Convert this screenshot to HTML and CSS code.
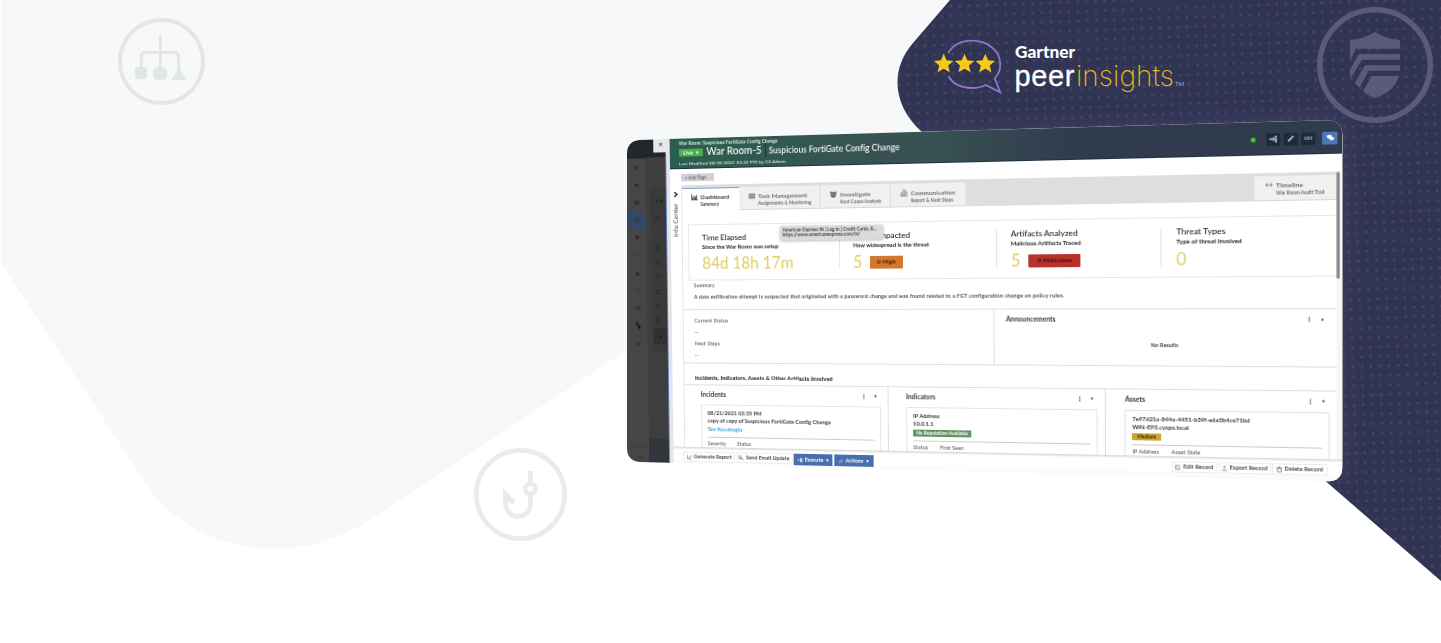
FILE: index.html
```
<!DOCTYPE html>
<html lang="en">
<head>
<meta charset="utf-8">
<title>War Room</title>
<link rel="stylesheet" href="styles.css">
</head>
<body>
<section class="hero">
  <svg class="backdrop" viewBox="0 0 1441 643" aria-hidden="true">
    <defs>
      <pattern id="dots" width="9.05" height="9.6" patternUnits="userSpaceOnUse" patternTransform="translate(1344.2 247.2) rotate(-2)">
        <circle cx="4.5" cy="4.8" r="1.4" fill="#454669"/>
      </pattern>
      <filter id="soft" x="-20%" y="-20%" width="140%" height="140%"><feGaussianBlur stdDeviation="12"/></filter>
      <clipPath id="wedge"><path d="M950 0L913 43C891 68 891 104 922 132L1441 581V0Z"/></clipPath>
    </defs>
    <path class="wave" d="M1 0V263L148 487C178 528 225 549 275 549Q322 549 370 520L627 350L1000 142V0Z"/>
    <g clip-path="url(#wedge)">
      <rect class="wedge" x="880" width="561" height="643"/>
      <path class="glow" d="M627 140L1342 120V482L627 461Z" filter="url(#soft)"/>
      <rect x="880" width="561" height="643" fill="url(#dots)"/>
    </g>
    <g class="mark mark-tree">
      <circle cx="161.5" cy="61.5" r="41.6" stroke-width="4"/>
      <path d="M160.4 36.3V68M141.3 68V56.5Q141.3 52.4 145.4 52.4H174.5Q178.6 52.4 178.6 56.5V70" stroke-width="3" stroke-linecap="round"/>
      <rect class="fill" x="135" y="67" width="12" height="12" rx="2"/>
      <circle class="fill" cx="160.2" cy="73.7" r="7.3"/>
      <path class="fill" d="M179 67.5L171.2 80.3H186.8Z"/>
    </g>
    <g class="mark mark-hook">
      <circle cx="520.5" cy="494.5" r="44.2" stroke-width="4.7"/>
      <path d="M530.4 471V484M530.4 495V504A12.3 12.3 0 0 1 505.6 504V494" stroke-width="4.8"/>
      <circle cx="530.4" cy="488.7" r="5.2" stroke-width="4.4"/>
      <path class="fill" d="M503.2 488.3L515.4 501.3L512 505L503.2 497Z"/>
    </g>
    <g class="mark mark-shield">
      <circle cx="1375" cy="65" r="55.2" stroke-width="5.6"/>
      <path class="fill" d="M1350 40Q1363.500 39 1375 32Q1386.500 39 1400 40V48.700H1356L1350 60.500Z"/>
      <path class="fill" d="M1400 54V59.700H1362L1350.600 78.700L1349.800 69.500L1359 54Z"/>
      <path class="fill" d="M1400 65.300V70.700H1368.500L1359.500 87.700L1354.700 83.300L1365 65.300Z"/>
      <path class="fill" d="M1371.700 76H1398.700Q1395 91.500 1375 98Q1368 96 1363 91.300Z"/>
    </g>
    <g class="peer-logo">
      <path class="bubble" d="M948.300 53C953 45 962 40.700 972 40.700C988 40.700 1000.300 51 1000.300 64.500C1000.300 70 998.500 74.500 994.700 78.300L1000.300 92.300L985.700 85C981 87.500 976 88 971.700 88C962 88 953 84 948.300 76.300"/>
      <path class="star" d="M943.700 53.800L946.500 60.300L953.400 60.900L948.200 65.500L949.800 72.300L943.700 68.700L937.600 72.300L939.200 65.500L934 60.900L940.900 60.300Z"/>
      <path class="star" d="M964.500 53.800L967.300 60.300L974.200 60.900L969 65.500L970.600 72.300L964.500 68.700L958.400 72.300L960 65.500L954.800 60.900L961.700 60.300Z"/>
      <path class="star" d="M985.300 53.800L988.100 60.300L995 60.900L989.800 65.500L991.400 72.300L985.300 68.700L979.200 72.300L980.800 65.500L975.600 60.900L982.500 60.300Z"/>
      <text class="gartner" x="1015" y="58.300" textLength="60" lengthAdjust="spacingAndGlyphs">Gartner</text>
      <text class="peer" x="1014.500" y="86.300" textLength="60">peer</text>
      <text class="insights" x="1076" y="86.300" textLength="98">insights</text>
      <text class="tm" x="1175" y="86" textLength="9">TM</text>
    </g>
  </svg>

  <div class="shot">
    <div class="app">
      <nav class="rail">
        <span class="rail-top">▣</span>
        <span>▤</span><span>◓</span><span>▦</span><span class="on">⤨</span><span class="dk">✥</span><span>⛉</span><span>◉</span><span>▢</span><span>⋈</span><span class="dk">▚</span><span>◍</span>
        <span class="rail-end">◎</span>
      </nav>
      <div class="list">
        <div class="list-top">›</div>
        <div class="list-card"><b>6 It</b><i></i><i class="gap"></i><i></i><i></i><i></i><i></i><i></i><em>◂</em></div>
        <div class="list-foot"></div>
      </div>
      <div class="close">✕</div>
      <div class="drawer">
        <header class="head">
          <div class="head-text">
            <div class="crumb">War Room: Suspicious FortiGate Config Change</div>
            <div class="title-row"><span class="live">Live&nbsp; ▾</span><span class="title">War Room-5</span><span class="subtitle">Suspicious FortiGate Config Change</span></div>
            <div class="modified">Last Modified 08/25/2021 03:35 PM by CS Admin</div>
          </div>
          <div class="tools">
            <span class="pulse"></span>
            <span class="tool"><svg viewBox="0 0 10 10"><path d="M1 5H4.500" stroke-width="1.500"/><path d="M5.500 3V7" stroke-width="1.500"/><path d="M7.800 1.800V4M7.800 4.500V6M7.800 6.500V8.500" stroke-width="1.800"/></svg></span>
            <span class="tool"><svg viewBox="0 0 10 10"><path d="M2.300 7.800L7.800 2.200" stroke-width="1.500"/></svg></span>
            <span class="tool"><svg viewBox="0 0 10 10"><rect x="1.200" y="3.900" width="3.600" height="2.200" rx="1.100"/><rect x="5.200" y="3.900" width="3.600" height="2.200" rx="1.100"/></svg></span>
            <span class="tool chat"><svg viewBox="0 0 10 10"><ellipse class="f" cx="4" cy="4" rx="2.600" ry="2"/><ellipse class="f" cx="6.400" cy="6" rx="2.400" ry="1.800"/></svg></span>
          </div>
        </header>
        <div class="tagbar"><span>+ Add Tags</span></div>
        <div class="body">
          <aside class="info"><svg viewBox="0 0 6 6"><path d="M2 1L4.500 3L2 5"/></svg><span>Info Center</span></aside>
          <main class="main">
            <div class="tabs">
              <div class="tab active"><svg viewBox="0 0 8 8"><path d="M.5 .5V7.200H8M2 6.500V4M3.500 6.500V2.500M5 6.500V3.500M6.500 6.500V1.500"/></svg><p>Dashboard<small>Summary</small></p></div>
              <div class="tab t2"><svg viewBox="0 0 8 8"><path d="M0 1.500H8M0 3.200H8M0 4.900H8M0 6.600H8"/></svg><p>Task Management<small>Assignments &amp; Monitoring</small></p></div>
              <div class="tab t3"><svg viewBox="0 0 8 8"><circle class="f" cx="1.600" cy="2" r="1.400"/><circle class="f" cx="6.400" cy="2" r="1.400"/><circle class="f" cx="4" cy="2.600" r="1.500"/><path class="f" d="M0 3.800H8L6 7.800H2Z"/></svg><p>Investigate<small>Root Cause Analysis</small></p></div>
              <div class="tab t4"><svg viewBox="0 0 8 8"><path d="M0 7.200H8M.7 7V4H2.700V7M3 7V.8H5V7M5.300 7V3H7.300V7" stroke-width=".8"/></svg><p>Communication<small>Report &amp; Next Steps</small></p></div>
              <div class="tab t5"><svg viewBox="0 0 8 8"><path d="M0 4H8M2.500 2L1 4L2.500 6M5.500 2L7 4L5.500 6" stroke-width=".7"/></svg><p>Timeline<small>War Room Audit Trail</small></p></div>
            </div>
            <div class="stats">
              <div class="stat"><h3>Time Elapsed</h3><h4>Since the War Room was setup</h4><div class="num">84d 18h 17m</div></div>
              <div class="stat"><h3>Assets Impacted</h3><h4>How widespread is the threat</h4><div class="num">5<span class="pill high">0 High</span></div></div>
              <div class="stat"><h3>Artifacts Analyzed</h3><h4>Malicious Artifacts Traced</h4><div class="num">5<span class="pill mal">0 Malicious</span></div></div>
              <div class="stat"><h3>Threat Types</h3><h4>Type of threat involved</h4><div class="num">0</div></div>
              <div class="tip">American Express IN | Log in | Credit Cards, R...<br>https://www.americanexpress.com/in/</div>
            </div>
            <div class="summary"><span>Summary</span><p>A data exfiltration attempt is suspected that originated with a password change and was found related to a FGT configuration change on policy rules.</p></div>
            <div class="status">
              <div class="now"><span>Current Status</span><span>--</span><span>Next Steps</span><span>--</span></div>
              <div class="news"><div class="bar"><b>Announcements</b><i>⋮</i><u>▴</u></div><p>No Results</p></div>
            </div>
            <div class="involved">Incidents, Indicators, Assets &amp; Other Artifacts Involved</div>
            <div class="cols">
              <div class="col"><div class="bar"><b>Incidents</b><i>⋮</i><u>▾</u></div>
                <div class="card"><p>08/21/2021 03:35 PM</p><p>copy of copy of Suspicious FortiGate Config Change</p><p class="link">Tan Kucukoglu</p><hr><p class="meta"><span>Severity</span><span>Status</span></p></div></div>
              <div class="col"><div class="bar"><b>Indicators</b><i>⋮</i><u>▾</u></div>
                <div class="card"><p>IP Address</p><p>10.0.1.1</p><p class="rep"><span>No Reputation Available</span></p><hr><p class="meta"><span>Status</span><span>First Seen</span></p></div></div>
              <div class="col"><div class="bar"><b>Assets</b><i>⋮</i><u>▾</u></div>
                <div class="card"><p>7e97d21a-844e-4451-b39f-e6a5b4ce71bd</p><p>WIN-EP3.cyops.local</p><p class="med"><span>Medium</span></p><hr><p class="meta"><span>IP Address</span><span>Asset State</span></p></div></div>
            </div>
          </main>
          <div class="track"><span></span></div>
        </div>
        <footer class="foot">
          <span class="btn b1"><svg viewBox="0 0 8 8"><path d="M.5 1V7H7M2 5.500L4 3.500L5 4.500L7 1.500"/></svg>Generate Report</span>
          <span class="btn b2"><svg viewBox="0 0 8 8"><path d="M.5 1H4V5H.5ZM3 3L7 7M5 5H7.500"/></svg>Send Email Update</span>
          <span class="btn b3"><svg viewBox="0 0 8 8"><path d="M0 4H3M5 1V7M7 1V7" stroke-width="1.400"/></svg>Execute&nbsp; ▾</span>
          <span class="btn b4"><svg viewBox="0 0 8 8"><path d="M1 7L7 1M1.500 4L3.500 2M4.500 6L6.500 4"/></svg>Actions&nbsp; ▾</span>
          <span class="btn b5"><svg viewBox="0 0 8 8"><path d="M5 1.500H1V7H6.500V4.500M3 5L7 1"/></svg>Edit Record</span>
          <span class="btn b6"><svg viewBox="0 0 8 8"><path d="M4 5V1M2.500 2.500L4 1L5.500 2.500M.5 7H7.500"/></svg>Export Record</span>
          <span class="btn b7"><svg viewBox="0 0 8 8"><path d="M1.500 2H6.500V7.500H1.500ZM.5 2H7.500M3 1H5"/></svg>Delete Record</span>
        </footer>
      </div>
    </div>
  </div>
</section>
</body>
</html>
```
FILE: styles.css
```
* { box-sizing: border-box; }
body { margin: 0; background: #fff; font-family: Lato, "Liberation Sans", sans-serif; }
p, h3, h4 { margin: 0; font-weight: inherit; }
.hero { position: relative; width: 1441px; height: 643px; overflow: hidden; background: #fff; }
.backdrop { display: block; width: 1441px; height: 643px; }
.wave { fill: #f7f8fa; }
.wedge { fill: #313453; }
.glow { fill: #5a4c72; opacity: .45; }
.mark { fill: none; stroke: currentColor; }
.mark .fill { fill: currentColor; stroke: none; }
.mark-tree { color: #e3e6e6; }
.mark-hook { color: #ebebeb; }
.mark-shield { color: #5c5979; }
.bubble { fill: none; stroke: #9273cb; stroke-width: 1.8; }
.star { fill: #f4c91c; }
.peer-logo text { fill: #fff; }
.peer-logo .gartner { font: 900 16.5px Lato, sans-serif; }
.peer-logo .peer { font: 400 29px "Liberation Sans", sans-serif; stroke: #fff; stroke-width: .3px; }
.peer-logo .insights { font: 200 28px Inter, Roboto, sans-serif; fill: #e3b91f; }
.peer-logo .tm { font: 300 6px Lato, sans-serif; }

/* screen outline, then the tilted plane inside it */
.shot {
  position: absolute; left: 627px; top: 119px; width: 716px; height: 364px;
  background: #fff;
  clip-path: path("M0 35Q0 21.500 14 20.800L700 1.200Q715.500 1 715.500 17V347Q715.500 363 700 362.300L14 343Q0 342.500 0 329Z");
}
.app {
  position: absolute; left: 0; top: 20.8px; width: 715px; height: 352px;
  display: flex; background: #fff; color: #333;
  transform-origin: 0 0;
  transform: matrix3d(.9, -.0253, 0, -.00013986, .0125, .9488, 0, .0000176, 0, 0, 1, 0, 0, 0, 0, 1);
}
.app svg { fill: none; stroke: currentColor; stroke-width: .8; }
.app svg .f { fill: currentColor; stroke: none; }
.rail { flex: none; width: 26.6px; margin-left: -7px; padding-left: 7px; background: #464646; color: #262626; font: 6px/18.6px "DejaVu Sans", sans-serif; display: flex; flex-direction: column; align-items: stretch; text-align: center; }
.rail span { display: block; height: 18.6px; }
.rail .rail-top { height: 20px; background: #22262d; line-height: 18px; margin-left: -7px; padding-left: 7px; }
.rail .on { background: #334766; margin-left: -7px; padding-left: 7px; }
.rail .dk { color: #121212; }
.rail .rail-end { margin-top: auto; height: 22px; margin-bottom: 6px; line-height: 20px; border-top: 1px solid #3b3b3b; }
.list { flex: none; width: 22px; background: #3e3e3e; display: flex; flex-direction: column; }
.list-top { height: 19px; background: #22262d; color: #0c0c0c; font: 8px/17px Lato, sans-serif; padding-left: 2px; }
.list-card { margin: 33px 0 0 6px; height: 172px; background: #3a3a3a; border: 1px solid #363636; border-width: 1px 0 0 1px; padding-left: 2px; }
.list-card b { display: block; height: 23px; font: 700 5px/25px Lato, sans-serif; color: #1a1a1a; padding-left: 3px; white-space: nowrap; overflow: hidden; }
.list-card i { display: block; width: 5px; height: 5px; margin: 5px 0 10.2px 1px; border: .7px solid #2b2b2b; }
.list-card .gap { margin-top: 26px; }
.list-card em { display: block; margin: -4px 0 0 -2px; height: 17px; background: #313131; font: 5px/17px "DejaVu Sans", sans-serif; color: #111; padding-left: 7px; }
.list-foot { margin-top: auto; height: 36px; background: #32353b; }
.close { position: absolute; left: 28.5px; top: -2px; width: 17px; height: 16px; background: #e8e7ea; color: #222; font: 6.5px/17px "DejaVu Sans", sans-serif; text-align: center; z-index: 2; }
.drawer { flex: 1; min-width: 0; border-left: 1.2px solid #5c80c2; padding-left: 4px; background: #e6e3e7; display: flex; flex-direction: column; position: relative; }
.head { height: 33px; margin-top: -1px; padding-top: 1px; flex: none; background: linear-gradient(90deg, #2b5f4d 0, #385253 33%, #385152 42%, #303c4e 62%, #303c4e 100%); color: #fff; display: flex; justify-content: space-between; border-bottom: .8px solid #1d3042; }
.head-text { padding: 2.2px 0 0 10.500px; white-space: nowrap; }
.crumb { font: 700 4.800px/6px Lato, sans-serif; letter-spacing: .12px; color: #dfe9e6; }
.title-row { display: flex; align-items: center; height: 14.500px; }
.live { width: 26px; height: 8px; background: #4cae4f; font: 700 5.600px/8px Lato, "DejaVu Sans", sans-serif; text-align: center; border-radius: 1px; letter-spacing: .2px; }
.title { font: 500 10.600px/13px Lato, sans-serif; width: 64px; margin-left: 4px; border-right: .8px solid #1c3336; height: 14px; }
.subtitle { font: 500 8.600px/12px Lato, sans-serif; letter-spacing: .03px; padding-left: 3px; }
.modified { font: 700 4.500px/7px Lato, sans-serif; letter-spacing: .09px; word-spacing: .2px; color: #d6e2df; letter-spacing: .28px; }
.tools { display: flex; align-items: flex-start; padding: 11px 3.800px 0 0; gap: 3px; }
.tool { width: 13px; height: 11.800px; background: #1d2a3a; color: #cfd4da; border-radius: 1px; display: flex; }
.tool svg { margin: auto; width: 9px; height: 9px; }
.tool.chat { background: #4b76b8; color: #fff; margin-left: 3.500px; width: 13.800px; height: 12.500px; margin-top: -.5px; }
.pulse { width: 6px; height: 6px; margin: 2.500px 6px 0 0; border-radius: 50%; background: #5cc935; border: 1.300px solid #2c6134; }
.tagbar { height: 16.800px; flex: none; background: #fff; padding: 5px 0 0 12.500px; }
.tagbar span { display: block; width: 36px; height: 8px; background: #d3d1d3; color: #6f6f6f; font: 700 4.700px/8px Lato, sans-serif; letter-spacing: .1px; padding-left: 4px; border-radius: 1px; }
.body { height: 275.500px; flex: none; display: flex; overflow: hidden; background: #fff; }
.info { width: 13px; flex: none; border-right: .8px solid #dfe4e6; }
.app .info svg { display: block; width: 7px; height: 7px; margin: 6px auto 2px; stroke: #222; stroke-width: 1.200; }
.info span { display: block; writing-mode: vertical-rl; transform: rotate(180deg); font: 6.500px/12px Lato, sans-serif; letter-spacing: .25px; margin-top: 3px; height: 40px; text-align: center; color: #333; }
.main { width: 650.300px; flex: none; }
.track { flex: 1; background: #f6f6f6; }
.track span { display: block; width: 3px; height: 102px; background: #8b8b8d; border-radius: 2px; }
.tabs { height: 27.600px; background: #dfddde; display: flex; padding-top: 3.400px; }
.tab { background: #f1f0f1; display: flex; border-right: .8px solid #dcdadc; border-bottom: .8px solid #d8d8d8; padding: 6px 0 0 10px; color: #6d6d6f; }
.tab svg { width: 7px; height: 7px; margin-right: 3.500px; stroke-width: 1; }
.tab p { font: 700 6.300px/7px Lato, sans-serif; letter-spacing: .08px; white-space: nowrap; }
.tab small { display: block; font: 700 4.600px/8.600px Lato, sans-serif; letter-spacing: .08px; }
.active { width: 62.500px; background: #fff; color: #333; border: 0; border-top: 1.200px solid #7fa0d4; padding-top: 5px; }
.t2 { width: 86px; padding-left: 9.500px; }
.t3 { width: 72.800px; padding-left: 10px; }
.t4 { width: 76.600px; border-right: 0; }
.t5 { width: 75.300px; margin-left: auto; padding: 5px 0 0 10px; border-right: 0; }
.t5 small { letter-spacing: .03px; }
.stats { position: relative; margin: 13.300px 0 0 6px; height: 59px; border: .9px solid #e6e6e8; border-right: 0; display: flex; }
.stat { width: 160.300px; flex: none; padding: 9.400px 0 0 14.500px; position: relative; white-space: nowrap; color: #222; }
.stat + .stat::before { content: ""; position: absolute; left: 0; top: 9px; height: 38px; border-left: .8px solid #e4e4e6; }
.stat h3 { font: 500 8.200px/9.800px Lato, sans-serif; }
.stat h4 { font: 700 5.900px/7.800px Lato, sans-serif; letter-spacing: .05px; }
.num { font: 400 16.500px/26px Lato, sans-serif; color: #e2cd60; display: flex; align-items: center; }
.num { padding-top: .6px; }
.pill { height: 12.500px; font: 700 6.400px/12.500px Lato, sans-serif; letter-spacing: .1px; color: #3a1d08; border-radius: 1px; text-align: center; margin-left: 8px; }
.high { width: 34px; background: #d3792d; }
.mal { width: 51px; background: #b8312c; color: #3c0c0a; }
.tip { position: absolute; left: 98px; top: 2.200px; width: 108px; height: 15px; background: #dddbda; border-radius: 2px; box-shadow: 0 1px 3px #0004; color: #444; font: 700 4.700px/5.800px Lato, sans-serif; letter-spacing: .03px; padding: 1.700px 0 0 3px; white-space: nowrap; z-index: 2; }
.summary { height: 31.600px; border-bottom: .9px solid #dcdfe1; padding: 2.300px 0 0 12.200px; font: 500 5.200px/7px Lato, sans-serif; letter-spacing: .12px; color: #444; }
.summary p { padding-top: 5.300px; font-weight: 700; letter-spacing: .28px; white-space: nowrap; }
.status { height: 55.500px; display: flex; border-bottom: .9px solid #dcdfe1; }
.now { width: 325px; border-right: 1.200px solid #dcdfe1; padding: 6.200px 0 0 12.200px; display: flex; flex-direction: column; font: 500 5.400px/11.700px Lato, sans-serif; letter-spacing: .16px; color: #555; }
.news { flex: 1; padding: 5.200px 0 0 11.800px; color: #444; }
.news p { font: 700 5.400px/8px Lato, sans-serif; letter-spacing: .06px; padding: 17px 0 0 141px; }
.bar { display: flex; font: 700 6.700px/9px Lato, sans-serif; letter-spacing: .04px; color: #333; }
.bar b { flex: 1; font-weight: 700; }
.bar i { font: 700 6px/9px "DejaVu Sans", sans-serif; width: 15px; text-align: center; color: #555; }
.bar u { font: 5px/9px "DejaVu Sans", sans-serif; width: 9px; text-align: center; text-decoration: none; margin-right: 8px; }
.involved { height: 22px; font: 900 5.700px/29px Lato, sans-serif; letter-spacing: .15px; color: #222; padding-left: 12.200px; }
.cols { display: flex; height: 90px; border-top: .9px solid #dcdfe1; }
.col { width: 217.300px; flex: none; padding: 5px 6.800px 0 18.200px; border-right: 1.200px solid #dcdfe1; }
.col .bar u { margin-right: 1px; }
.card { margin-top: 6px; height: 80px; border: .9px solid #e2e4e6; padding: 4px 6px 0 6px; font: 700 5.650px/8.600px Lato, sans-serif; letter-spacing: .06px; color: #333; white-space: nowrap; }
.card .link { color: #3a9be0; }
.card hr { margin: 3px 0 2.500px; border: 0; border-top: .8px solid #ccc; }
.card .meta { font: 500 5.300px/8px Lato, sans-serif; letter-spacing: .1px; color: #555; display: flex; gap: 12px; }
.rep span, .med span { display: block; width: 59px; height: 7.500px; background: #5f915c; color: #fff; font: 700 4.800px/7.500px Lato, sans-serif; text-align: center; }
.rep, .med { height: 8.600px; padding-top: .6px; }
.med span { width: 28px; background: #cba634; color: #332605; }
.foot { flex: 1; display: flex; align-items: flex-start; background: linear-gradient(#d2d4d7, #fff 3px, #fff 12px, #f4f4f4); padding: 5px 13px 0 11.500px; gap: 1.500px; }
.btn { height: 11px; font: 700 5.500px/11px Lato, "DejaVu Sans", sans-serif; letter-spacing: .04px; color: #444; background: #fff; border: .6px solid #ececee; display: flex; align-items: center; justify-content: center; white-space: nowrap; }
.btn svg { width: 5.500px; height: 5.500px; margin-right: 2px; }
.b1 { width: 56px; }
.b2 { width: 60px; }
.b3, .b4 { background: #476fb0; color: #fff; border: 0; height: 12px; width: 41px; }
.b5 { width: 43px; margin-left: auto; }
.b6 { width: 48px; }
.b7 { width: 51px; }
```
